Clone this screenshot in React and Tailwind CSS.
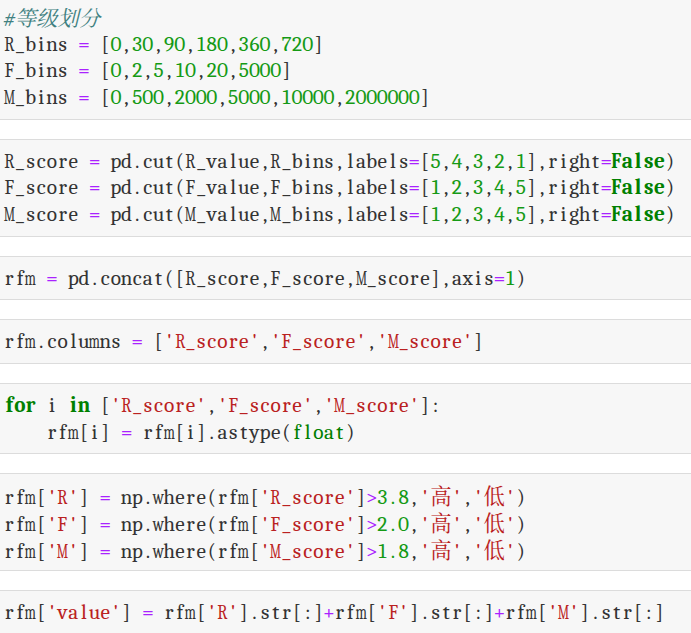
import React from "react";

const CLS = {
  def: "text-[#333333]",
  op: "text-[#aa22ff]",
  num: "text-[#159a15]",
  str: "text-[#ba2121]",
  kw: "text-[#008000] font-bold",
  bi: "text-[#008000]",
  com: "text-[#408080] italic",
};

const SCALE = {
  m: "scale-x-[0.66]",
  w: "scale-x-[0.72]",
  R: "scale-x-[0.78]",
  F: "scale-x-[0.88]",
  M: "scale-x-[0.6]",
};

function tokenize(line) {
  const re = /(#.*$)|('[^']*')|(\b\d+(?:\.\d+)?\b)|(\b(?:for|in|False)\b)|(\bfloat\b)|([=+>])/g;
  const out = [];
  let last = 0;
  let m;
  while ((m = re.exec(line)) !== null) {
    if (m.index > last) out.push([line.slice(last, m.index), "def"]);
    const kind = m[1] ? "com" : m[2] ? "str" : m[3] ? "num" : m[4] ? "kw" : m[5] ? "bi" : "op";
    out.push([m[0], kind]);
    last = m.index + m[0].length;
  }
  if (last < line.length) out.push([line.slice(last), "def"]);
  return out;
}

function Ch({ ch, kind }) {
  const cjk = ch.charCodeAt(0) > 0x2000;
  return (
    <span
      className={`inline-flex justify-center ${
        cjk ? "w-[21.33px] font-['Noto_Serif_CJK_SC','Noto_Sans_CJK_SC',sans-serif]" : "w-[10.67px]"
      } ${CLS[kind]} ${SCALE[ch] || ""}`}
    >
      {ch}
    </span>
  );
}

function Line({ text }) {
  const toks = tokenize(text);
  return (
    <div className="flex h-[26.67px] items-baseline whitespace-nowrap font-serif">
      {toks.map(([t, kind], i) =>
        Array.from(t).map((ch, j) => <Ch key={`${i}-${j}`} ch={ch} kind={kind} />)
      )}
    </div>
  );
}

function Cell({ lines, first }) {
  return (
    <div
      className={
        first
          ? "bg-[#f7f7f7] border-b border-[#dcdcdc] pl-[4px] pt-[4px] pb-[8px]"
          : "bg-[#f7f7f7] border-y border-[#dcdcdc] pl-[4px] py-[8px]"
      }
    >
      {lines.map((l, i) => (
        <Line key={i} text={l} />
      ))}
    </div>
  );
}

const CELLS = [
  [
    "#等级划分",
    "R_bins = [0,30,90,180,360,720]",
    "F_bins = [0,2,5,10,20,5000]",
    "M_bins = [0,500,2000,5000,10000,2000000]",
  ],
  [
    "R_score = pd.cut(R_value,R_bins,labels=[5,4,3,2,1],right=False)",
    "F_score = pd.cut(F_value,F_bins,labels=[1,2,3,4,5],right=False)",
    "M_score = pd.cut(M_value,M_bins,labels=[1,2,3,4,5],right=False)",
  ],
  ["rfm = pd.concat([R_score,F_score,M_score],axis=1)"],
  ["rfm.columns = ['R_score','F_score','M_score']"],
  ["for i in ['R_score','F_score','M_score']:", "    rfm[i] = rfm[i].astype(float)"],
  [
    "rfm['R'] = np.where(rfm['R_score']>3.8,'高','低')",
    "rfm['F'] = np.where(rfm['F_score']>2.0,'高','低')",
    "rfm['M'] = np.where(rfm['M_score']>1.8,'高','低')",
  ],
  ["rfm['value'] = rfm['R'].str[:]+rfm['F'].str[:]+rfm['M'].str[:]"],
];

export default function App() {
  return (
    <div className="min-h-screen bg-white font-serif text-[21.33px] leading-[26.67px]">
      <div className="flex flex-col gap-[19px]">
        {CELLS.map((lines, i) => (
          <Cell key={i} lines={lines} first={i === 0} />
        ))}
      </div>
    </div>
  );
}
